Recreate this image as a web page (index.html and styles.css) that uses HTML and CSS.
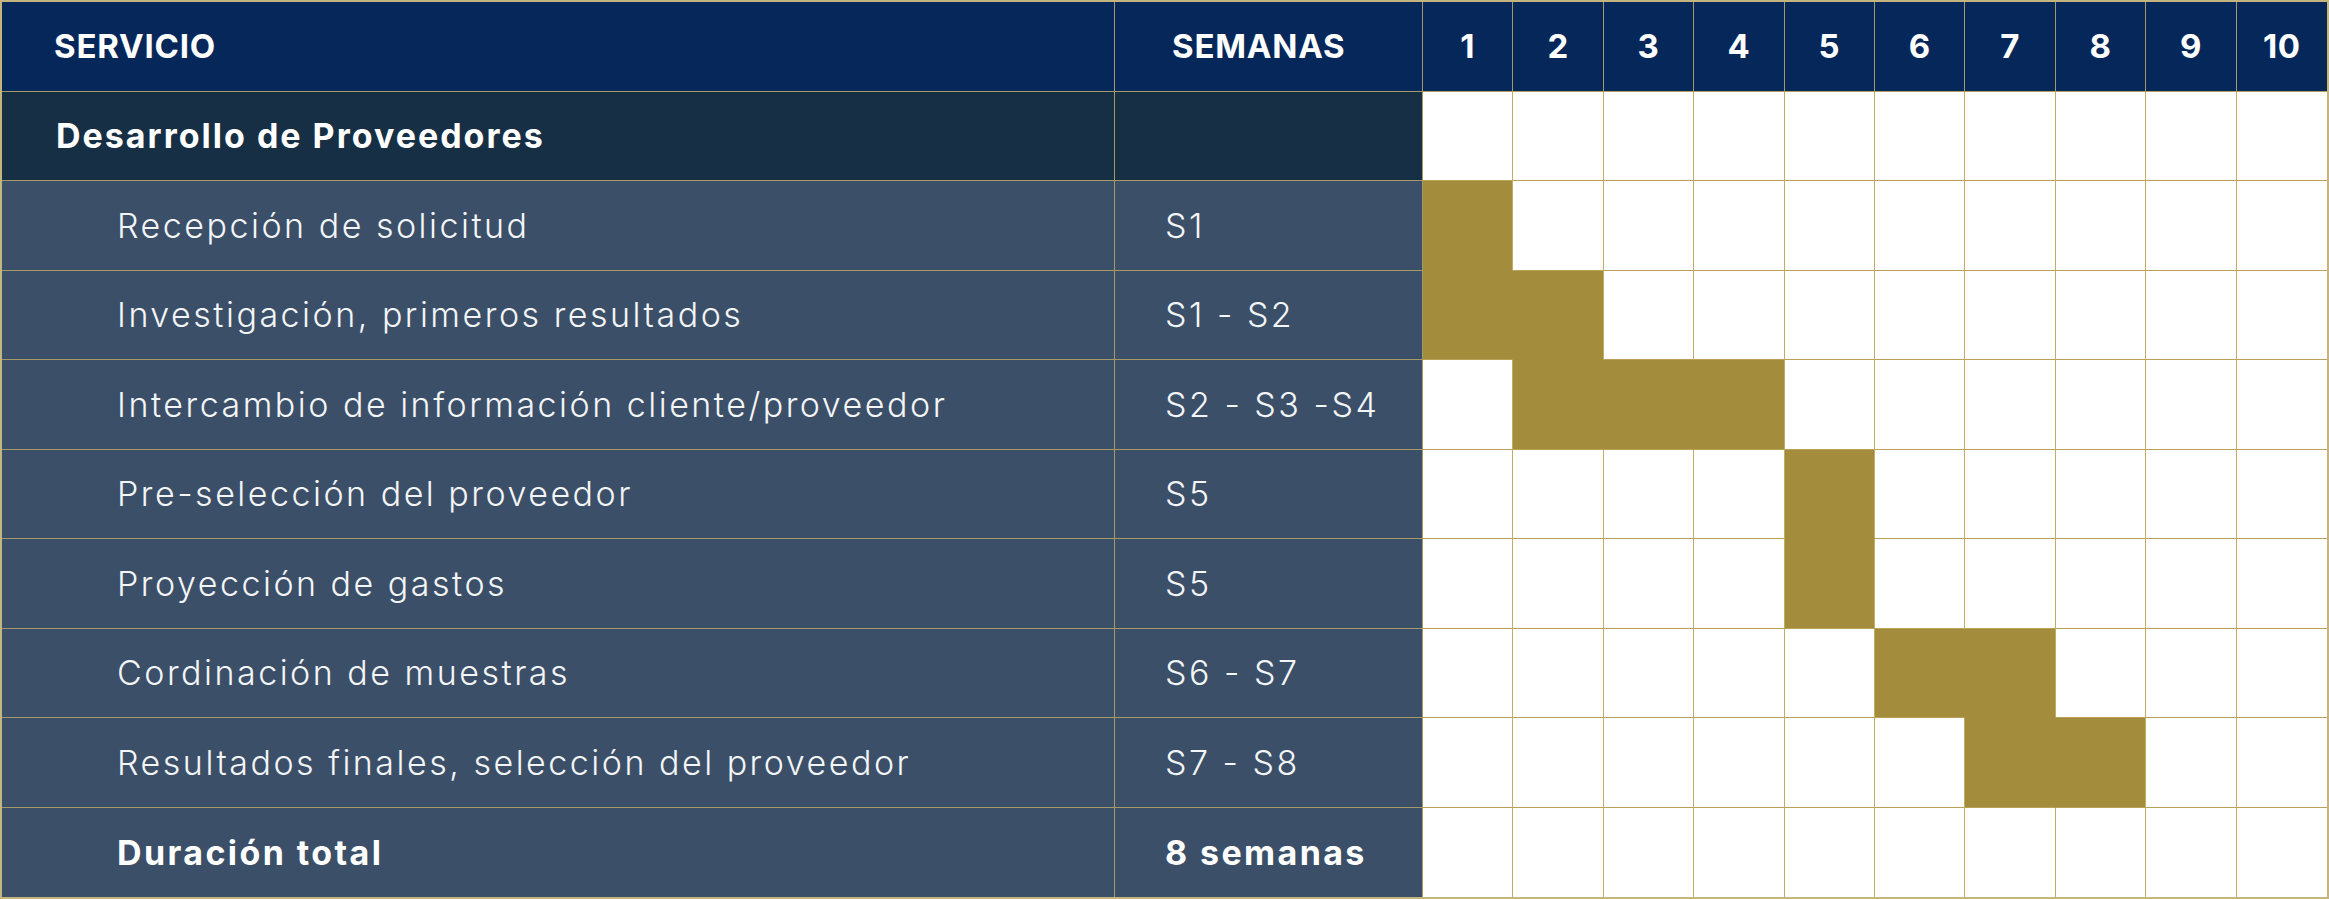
FILE: index.html
```html
<!DOCTYPE html>
<html lang="es">
<head>
<meta charset="utf-8">
<title>Cronograma</title>
<link rel="stylesheet" href="styles.css">
</head>
<body>
<div class="chart">
  <div class="cell hd svc">SERVICIO</div>
  <div class="cell hd sem">SEMANAS</div>
  <div class="cell hd wk">1</div>
  <div class="cell hd wk">2</div>
  <div class="cell hd wk">3</div>
  <div class="cell hd wk">4</div>
  <div class="cell hd wk">5</div>
  <div class="cell hd wk">6</div>
  <div class="cell hd wk">7</div>
  <div class="cell hd wk">8</div>
  <div class="cell hd wk">9</div>
  <div class="cell hd wk last">10</div>

  <div class="cell sec svc">Desarrollo de Proveedores</div>
  <div class="cell sec sem"></div>
  <div class="cell g"></div><div class="cell g"></div><div class="cell g"></div><div class="cell g"></div><div class="cell g"></div><div class="cell g"></div><div class="cell g"></div><div class="cell g"></div><div class="cell g"></div><div class="cell g last"></div>

  <div class="cell it svc">Recepción de solicitud</div>
  <div class="cell it sem">S1</div>
  <div class="cell g on onb"></div><div class="cell g"></div><div class="cell g"></div><div class="cell g"></div><div class="cell g"></div><div class="cell g"></div><div class="cell g"></div><div class="cell g"></div><div class="cell g"></div><div class="cell g last"></div>

  <div class="cell it svc">Investigación, primeros resultados</div>
  <div class="cell it sem">S1 - S2</div>
  <div class="cell g on onr"></div><div class="cell g on onb"></div><div class="cell g"></div><div class="cell g"></div><div class="cell g"></div><div class="cell g"></div><div class="cell g"></div><div class="cell g"></div><div class="cell g"></div><div class="cell g last"></div>

  <div class="cell it svc">Intercambio de información cliente/proveedor</div>
  <div class="cell it sem">S2 - S3 -S4</div>
  <div class="cell g"></div><div class="cell g on onr"></div><div class="cell g on onr"></div><div class="cell g on"></div><div class="cell g"></div><div class="cell g"></div><div class="cell g"></div><div class="cell g"></div><div class="cell g"></div><div class="cell g last"></div>

  <div class="cell it svc">Pre-selección del proveedor</div>
  <div class="cell it sem">S5</div>
  <div class="cell g"></div><div class="cell g"></div><div class="cell g"></div><div class="cell g"></div><div class="cell g on onb"></div><div class="cell g"></div><div class="cell g"></div><div class="cell g"></div><div class="cell g"></div><div class="cell g last"></div>

  <div class="cell it svc">Proyección de gastos</div>
  <div class="cell it sem">S5</div>
  <div class="cell g"></div><div class="cell g"></div><div class="cell g"></div><div class="cell g"></div><div class="cell g on"></div><div class="cell g"></div><div class="cell g"></div><div class="cell g"></div><div class="cell g"></div><div class="cell g last"></div>

  <div class="cell it svc">Cordinación de muestras</div>
  <div class="cell it sem">S6 - S7</div>
  <div class="cell g"></div><div class="cell g"></div><div class="cell g"></div><div class="cell g"></div><div class="cell g"></div><div class="cell g on onr"></div><div class="cell g on onb"></div><div class="cell g"></div><div class="cell g"></div><div class="cell g last"></div>

  <div class="cell it svc">Resultados finales, selección del proveedor</div>
  <div class="cell it sem">S7 - S8</div>
  <div class="cell g"></div><div class="cell g"></div><div class="cell g"></div><div class="cell g"></div><div class="cell g"></div><div class="cell g"></div><div class="cell g on onr"></div><div class="cell g on"></div><div class="cell g"></div><div class="cell g last"></div>

  <div class="cell it svc bold bot">Duración total</div>
  <div class="cell it sem bold bot">8 semanas</div>
  <div class="cell g bot"></div><div class="cell g bot"></div><div class="cell g bot"></div><div class="cell g bot"></div><div class="cell g bot"></div><div class="cell g bot"></div><div class="cell g bot"></div><div class="cell g bot"></div><div class="cell g bot"></div><div class="cell g bot last"></div>
</div>
</body>
</html>
```

FILE: styles.css
```css
* { box-sizing: border-box; }
html, body { margin: 0; padding: 0; background: #ffffff; }
body {
  font-family: Inter, "Noto Sans", sans-serif;
  color: #ffffff;
}
.chart {
  width: 2329px;
  height: 899px;
  border: 2px solid #c4b47e;
  display: grid;
  grid-template-columns: 1113px 308px repeat(10, 1fr);
  grid-template-rows: repeat(10, 1fr);
}
.cell {
  display: flex;
  align-items: center;
  border-right: 1px solid #a59a66;
  border-bottom: 1px solid #a59a66;
  white-space: nowrap;
}
.cell.last { border-right: none; }
.cell.bot { border-bottom: none; }

.hd {
  background: #05275a;
  font-weight: 700;
  font-size: 33px;
  letter-spacing: 0.8px;
}
.hd.wk { justify-content: center; border-bottom-color: #b39f5c; letter-spacing: 0.5px; }
.hd.svc { padding-left: 52px; }
.hd.sem { padding-left: 57px; }

.sec {
  background: #172f45;
  font-weight: 700;
  font-size: 34px;
  letter-spacing: 2px;
}
.sec.svc { padding-left: 54px; }

.it {
  background: #3b5068;
  font-weight: 300;
  font-size: 34px;
  letter-spacing: 2.5px;
  color: #f4f5f7;
}
.it.svc { padding-left: 115px; }
.it.sem { padding-left: 50px; }
.it.bold { font-weight: 700; color: #ffffff; letter-spacing: 2.4px; }

.g {
  background: #ffffff;
  border-right-color: #c2ad64;
  border-bottom-color: #b9a257;
}
.g.on { background: #a38d3c; }
.g.onr { border-right-color: #a38d3c; }
.g.onb { border-bottom-color: #a38d3c; }
```
